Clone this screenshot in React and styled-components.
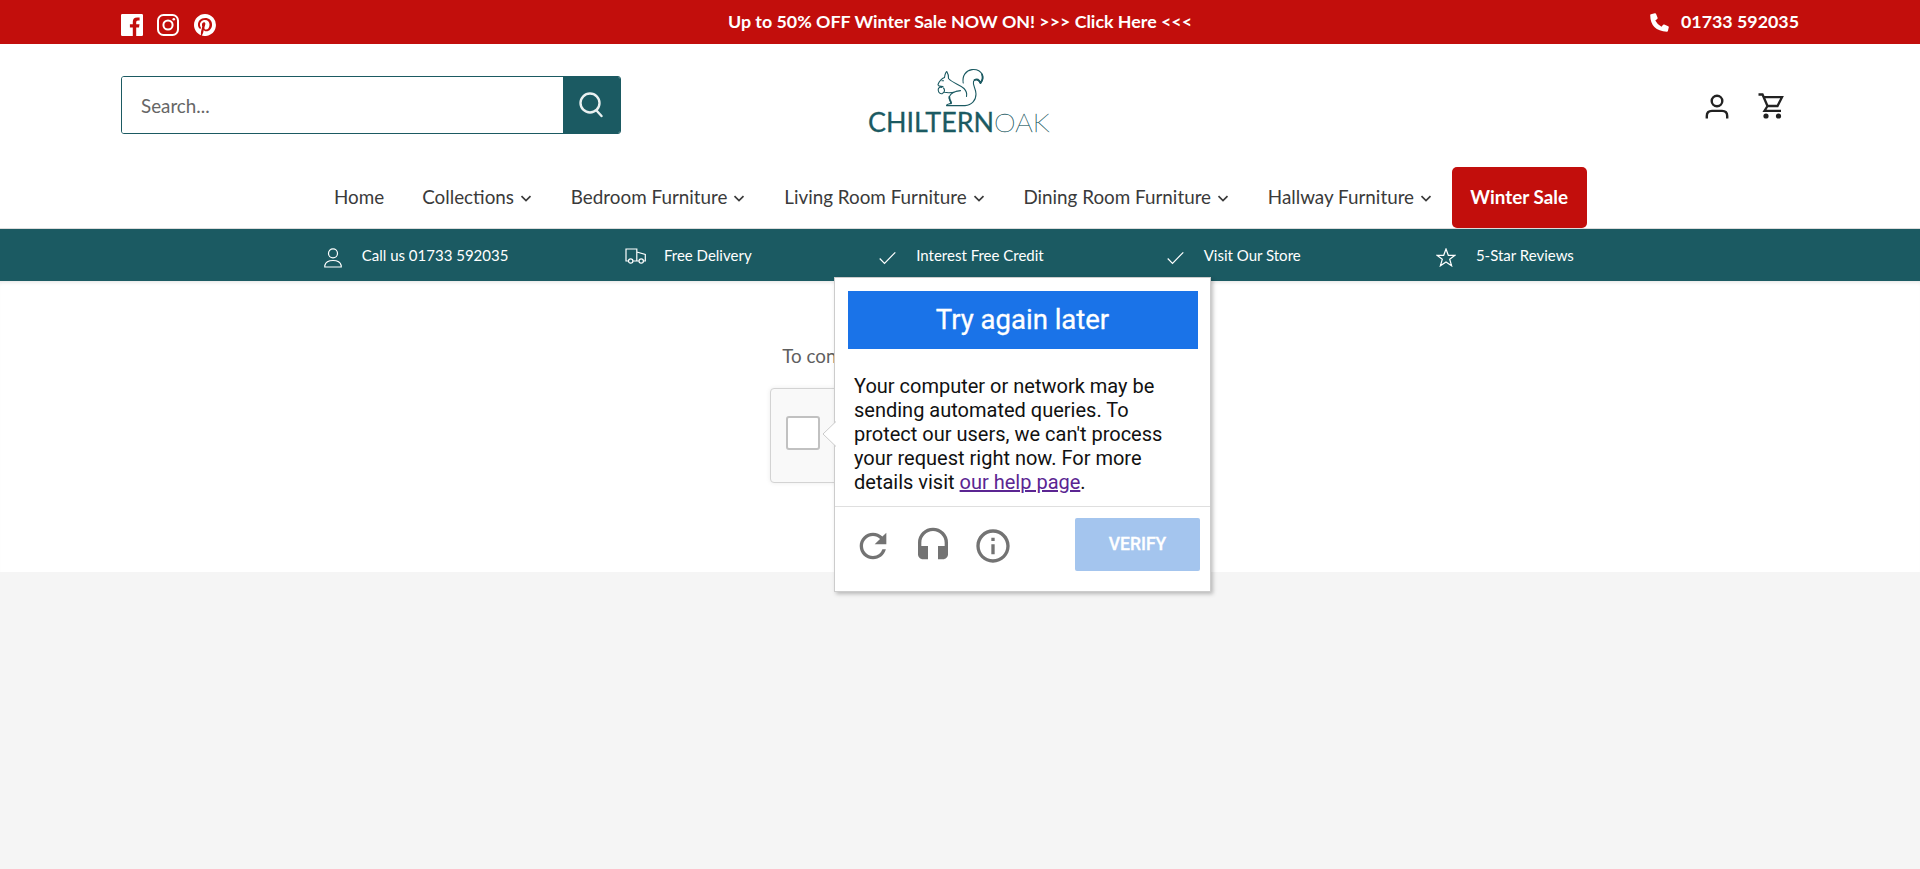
import React from "react";
import styled, { createGlobalStyle } from "styled-components";
import { MdRefresh, MdHeadset, MdInfoOutline } from "react-icons/md";

const TEAL = "#1b5a62";
const RED = "#c20e0c";

const Global = createGlobalStyle`
  *, *::before, *::after { box-sizing: border-box; }
  body { margin: 0; background: #f5f5f5; font-family: Lato, "Liberation Sans", sans-serif; font-size: 18.8px; }
  a { color: inherit; text-decoration: none; }
  svg { display: block; flex: none; }
`;

const Page = styled.div`
  min-height: 869px;
  overflow: hidden;
`;

const TopBar = styled.div`
  height: 44px;
  padding: 0 121px 2px;
  display: grid;
  grid-template-columns: 1fr auto 1fr;
  align-items: center;
  background: ${RED};
  color: #fff;
  font-size: 17.82px;
  font-weight: 700;
  line-height: 42px;
`;

const Social = styled.div`
  display: flex;
  gap: 14px;
  padding-top: 7px;
  svg:last-child { margin-left: 1px; }
`;

const Phone = styled.a`
  display: flex;
  align-items: center;
  justify-content: flex-end;
  gap: 12px;
  svg { margin-top: 2px; }
`;

const Header = styled.header`
  height: 185px;
  background: #fff;
  border-bottom: 1px solid #dcdcdc;
`;

const HeaderMain = styled.div`
  height: 123px;
  padding: 0 120px;
  display: grid;
  grid-template-columns: 1fr auto 1fr;
`;

const Search = styled.form`
  display: flex;
  width: 500px;
  height: 58px;
  margin: 32px 0 0 1px;
  border: 1px solid ${TEAL};
  border-radius: 3px;
  overflow: hidden;
`;

const SearchInput = styled.input`
  flex: 1;
  min-width: 0;
  border: 0;
  outline: 0;
  padding: 1px 19px 0;
  font: inherit;
  background: #fff;
  &::placeholder { color: #666; opacity: 1; }
`;

const SearchButton = styled.button`
  display: grid;
  place-items: center;
  width: 57px;
  padding: 0 2px 0 0;
  border: 0;
  background: ${TEAL};
`;

const LogoSvg = styled.svg`
  margin-top: 20px;
  font-family: Lato, sans-serif;
  fill: ${TEAL};
  stroke: ${TEAL};
`;

const Account = styled.div`
  display: flex;
  justify-content: flex-end;
  gap: 29px;
  padding: 49px 16px 0 0;
`;

const Nav = styled.nav`
  display: flex;
  height: 61px;
  padding-left: 315px;
  font-size: 18.83px;
`;

const NavItem = styled.a`
  display: flex;
  align-items: center;
  gap: 4px;
  padding: 0 19px 2px;
  color: #3a3a3a;
  white-space: nowrap;
  svg { margin: 2px -1.2px 0 0; }
`;

const SaleItem = styled(NavItem)`
  padding: 0 18.5px 2px;
  background: ${RED};
  color: #fff;
  font-weight: 700;
  border-radius: 5px;
`;

const Benefits = styled.div`
  height: 52px;
  background: ${TEAL};
`;

const BenefitGrid = styled.div`
  display: grid;
  grid-template-columns: repeat(5, 1fr);
  width: 1362px;
  height: 52px;
  margin: 0 auto;
  padding-left: 1px;
`;

const Benefit = styled.div`
  display: flex;
  align-items: center;
  justify-content: center;
  gap: ${(p) => p.$gap || 20}px;
  padding-left: ${(p) => p.$shift || 0}px;
  color: #fff;
  font-size: 15px;
  svg { margin-top: ${(p) => p.$drop || 5}px; }
`;

const Main = styled.main`
  height: 291px;
  padding-top: 61px;
  background: #fff;
  box-shadow: inset 0 4px 4px -3px rgba(0, 0, 0, 0.12);
  display: flex;
  flex-direction: column;
  align-items: center;
`;

const Prompt = styled.p`
  margin: 0;
  line-height: 27px;
  color: #5f5f5f;
`;

const Widget = styled.div`
  position: relative;
  width: 380px;
  height: 95px;
  margin-top: 19px;
  padding: 27px 15px;
  background: #f9f9f9;
  border: 1px solid #d3d3d3;
  border-radius: 4px;
  box-shadow: 0 0 5px rgba(0, 0, 0, 0.08);
`;

const Checkbox = styled.div`
  width: 34px;
  height: 34px;
  border: 2px solid #c1c1c1;
  border-radius: 3px;
  background: #fff;
`;

const Dialog = styled.section`
  position: absolute;
  left: 63px;
  top: -112px;
  width: 377px;
  height: 315px;
  background: #fff;
  border: 1px solid #ccc;
  box-shadow: 2px 2px 4px rgba(0, 0, 0, 0.25);
  font-family: Roboto, sans-serif;
`;

const Pointer = styled.svg`
  position: absolute;
  left: -13px;
  top: 143px;
`;

const DialogTitle = styled.div`
  height: 58px;
  margin: 13px 12px 0 13px;
  padding-right: 1px;
  background: #1a73e8;
  color: #fff;
  font-size: 27.5px;
  line-height: 57px;
  text-align: center;
  -webkit-text-stroke: 0.3px #fff;
`;

const DialogText = styled.p`
  height: 157px;
  margin: 0;
  padding: 25px 19px 0;
  color: #111;
  font-size: 20px;
  line-height: 24px;
  white-space: nowrap;
  a { color: #5b2592; text-decoration: underline; }
`;

const DialogFooter = styled.div`
  display: flex;
  height: 85px;
  padding: 11px 10px 0 18px;
  border-top: 1px solid #dfdfdf;
`;

const Controls = styled.div`
  display: flex;
  flex: 1;
  gap: 20px;
  padding-top: 8px;
  color: #737373;
`;

const Verify = styled.button`
  width: 125px;
  height: 53px;
  padding: 0 0 2px;
  border: 0;
  border-radius: 2px;
  background: #a4c5ee;
  color: #fff;
  font: 500 17.5px Roboto, sans-serif;
  -webkit-text-stroke: 0.3px #fff;
`;

const Chevron = () => (
  <svg width="16" height="16" viewBox="0 0 16 16" fill="none" stroke="#3a3a3a" strokeWidth="1.7">
    <path d="M3.500 6.200 8 10.600l4.500-4.400" />
  </svg>
);

const Line = ({ w, h, children }) => (
  <svg width={w} height={h} viewBox={`0 0 ${w} ${h}`} fill="none" stroke="#fff" strokeWidth="1.2">
    {children}
  </svg>
);

const Logo = () => (
  <LogoSvg width="186" height="84" viewBox="867 64 186 84">
    <g fill="none" strokeWidth="1.1" strokeLinecap="round" strokeLinejoin="round">
      <path d="M944.500 77.500 C945 74.500 946 72 946.800 71.600 C948 73.500 948.800 76 948.500 78.500 C953 83.500 960 84.500 964 88.500 C966.500 91 967 94 966.500 96.500" />
      <path d="M944.500 77.500 C940.500 79 939 82 938 84.500 C938 86 940.500 86.500 943 86.500 M942 80.700 h1.500" />
      <path d="M942 87.500 C938.500 86.500 938 89 938.300 90.500 C938.500 93 940.500 94 942.300 93.600 C945 92.500 945 89.500 943.500 88 M944.500 92.300 C950 93.500 953 92.500 956 91.400 L960.500 90.600 M956 91.400 C951.500 93 949 96 949.300 98.500 C949.500 101 951.500 102 951 103.300 C949.500 104.500 946.500 103.500 946.500 105.600 H965 C972 105.300 976 100 976 94 C976 88.500 972.500 85.500 973.500 81.500 C975 78.500 979 79.500 980.500 83.500 C982.500 80.500 983.300 77 982.300 74.500 C980 70 975.500 69.300 972 69.600 C966 70.500 962 75.500 963.200 83" />
      <path strokeWidth="1.8" d="M949.300 97 C949.500 101 951.500 101.500 951 103.300 M974.500 80 C977 78.500 979 79.500 980.500 83 C982.500 80.500 983 77 982 74.500" />
    </g>
    <text x="868" y="132.300" fontSize="26" fontWeight="400" strokeWidth="0.3" textLength="126" lengthAdjust="spacingAndGlyphs">CHILTERN</text>
    <text x="994" y="132.300" fontSize="26" fontWeight="100" strokeWidth="0.3" textLength="55.500" lengthAdjust="spacingAndGlyphs">OAK</text>
  </LogoSvg>
);

const LINKS = ["Collections", "Bedroom Furniture", "Living Room Furniture", "Dining Room Furniture", "Hallway Furniture"];

const Check = () => (
  <Line w={17} h={14}><path d="M.7 7.500 5.500 12.300 16.300 1.300" /></Line>
);

export default function App() {
  return (
    <Page>
      <Global />
      <TopBar>
        <Social>
          <svg width="22" height="22" viewBox="0 0 22 22" fill="#fff">
            <path d="M1.200 0H20.800Q22 0 22 1.200V20.800Q22 22 20.800 22H15.200V13.500H18L18.500 10.200H15.200V8Q15.200 6.500 16.900 6.500H18.600V3.600Q17.600 3.400 16.200 3.400Q11.800 3.400 11.800 7.700V10.200H8.900V13.500H11.800V22H1.200Q0 22 0 20.800V1.200Q0 0 1.200 0Z" />
          </svg>
          <svg width="22" height="22" viewBox="0 0 22 22" fill="none" stroke="#fff" strokeWidth="2">
            <rect x="1" y="1" width="20" height="20" rx="5.500" />
            <circle cx="11" cy="11" r="4.600" />
            <circle cx="16.800" cy="5.200" r="1.300" fill="#fff" stroke="none" />
          </svg>
          <svg width="22" height="22" viewBox="0 0 24 24" fill="#fff">
            <path d="M12 0C5.370 0 0 5.370 0 12c0 5.080 3.160 9.420 7.620 11.170-.1-.95-.2-2.400.04-3.440.22-.93 1.400-5.960 1.400-5.960s-.36-.72-.36-1.780c0-1.660.97-2.910 2.170-2.910 1.020 0 1.520.77 1.520 1.690 0 1.030-.66 2.570-1 3.990-.28 1.190.6 2.170 1.780 2.170 2.130 0 3.770-2.250 3.770-5.490 0-2.870-2.060-4.880-5.010-4.880-3.410 0-5.420 2.560-5.420 5.210 0 1.030.4 2.140.9 2.740.1.120.11.220.08.340-.09.370-.29 1.190-.33 1.360-.05.220-.17.270-.4.160-1.500-.7-2.440-2.890-2.440-4.650 0-3.790 2.750-7.270 7.940-7.270 4.170 0 7.410 2.970 7.410 6.940 0 4.140-2.610 7.480-6.240 7.480-1.220 0-2.360-.63-2.750-1.380l-.75 2.850c-.27 1.040-1 2.350-1.490 3.150A12 12 0 1 0 12 0Z" />
          </svg>
        </Social>
        <a href="#sale">Up to 50% OFF Winter Sale NOW ON! &gt;&gt;&gt; Click Here &lt;&lt;&lt;</a>
        <Phone href="#call">
          <svg width="19" height="19" viewBox="0 0 19 19" fill="#fff">
            <path d="M1 1.200 4.800.2Q5.700 0 6 .8L7.600 4.700Q7.800 5.400 7.200 6L5.300 7.500Q7.500 11.800 11.500 13.700L13.100 11.800Q13.600 11.200 14.300 11.500L18.200 13.200Q19 13.500 18.800 14.300L17.900 18.100Q17.700 18.800 16.900 18.800Q.4 18 .2 2.100Q.2 1.400 1 1.200Z" />
          </svg>
          01733 592035
        </Phone>
      </TopBar>

      <Header>
        <HeaderMain>
          <Search>
            <SearchInput placeholder="Search..." />
            <SearchButton type="button" aria-label="Search">
              <svg width="24" height="26" viewBox="0 0 24 26" fill="none" stroke="#e9f0f0" strokeWidth="2.400" strokeLinecap="round">
                <circle cx="11" cy="11" r="9.500" />
                <path d="m17.500 18.500 5 5.500" />
              </svg>
            </SearchButton>
          </Search>
          <Logo />
          <Account>
            <svg width="24" height="26" viewBox="0 0 24 26" fill="none" stroke="#222" strokeWidth="2.400">
              <circle cx="12" cy="8" r="5.300" />
              <path d="M1.800 25.500V23Q1.800 17.900 7 17.900H17Q22.200 17.900 22.200 23V25.500" />
            </svg>
            <svg width="26" height="26" viewBox="0 0 26 26" fill="none" stroke="#222" strokeWidth="2.300">
              <path d="M.5 1.500H4.500L9.500 13H19.500L24 4.200H6M9.500 13 6.500 17.800H23" />
              <circle cx="8" cy="23" r="2.600" fill="#222" stroke="none" />
              <circle cx="20.500" cy="23" r="2.600" fill="#222" stroke="none" />
            </svg>
          </Account>
        </HeaderMain>
        <Nav>
          <NavItem href="#home">Home</NavItem>
          {LINKS.map((label) => (
            <NavItem key={label} href="#menu">{label}<Chevron /></NavItem>
          ))}
          <SaleItem href="#sale">Winter Sale</SaleItem>
        </Nav>
      </Header>

      <Benefits>
        <BenefitGrid>
          <Benefit>
            <Line w={18} h={20}><circle cx="9" cy="5.300" r="4.500" /><path d="M.8 19V17.500Q2 12.500 9 12.500T17.200 17.500V19Z" /></Line>
            Call us 01733 592035
          </Benefit>
          <Benefit $drop={1} $gap={18}>
            <Line w={21} h={16}><path d="M3.500 13H1V1H11.800V13H8M11.800 4 20.300 6.500V13H18.500M13.800 13H8" /><circle cx="5.700" cy="13" r="2.200" /><circle cx="16.200" cy="13" r="2.200" /></Line>
            Free Delivery
          </Benefit>
          <Benefit $shift={2}><Check />Interest Free Credit</Benefit>
          <Benefit $shift={2}><Check />Visit Our Store</Benefit>
          <Benefit>
            <Line w={20} h={19}><path d="M10 1 12.300 7.300H19L13.700 11.200 15.600 17.800 10 13.900 4.400 17.800 6.300 11.200 1 7.300H7.700Z" /></Line>
            5-Star Reviews
          </Benefit>
        </BenefitGrid>
      </Benefits>

      <Main>
        <Prompt>To continue, let us know you're not a robot.</Prompt>
        <Widget>
          <Checkbox />
          <Dialog>
            <Pointer width="14" height="26" viewBox="0 0 14 26">
              <path d="M14 .5 1 13 14 25.500" fill="#fff" stroke="#ccc" />
            </Pointer>
            <DialogTitle>Try again later</DialogTitle>
            <DialogText>
              Your computer or network may be<br />
              sending automated queries. To<br />
              protect our users, we can't process<br />
              your request right now. For more<br />
              details visit <a href="#help">our help page</a>.
            </DialogText>
            <DialogFooter>
              <Controls>
                <MdRefresh size={40} />
                <MdHeadset size={40} />
                <MdInfoOutline size={40} />
              </Controls>
              <Verify type="button">VERIFY</Verify>
            </DialogFooter>
          </Dialog>
        </Widget>
      </Main>
    </Page>
  );
}
